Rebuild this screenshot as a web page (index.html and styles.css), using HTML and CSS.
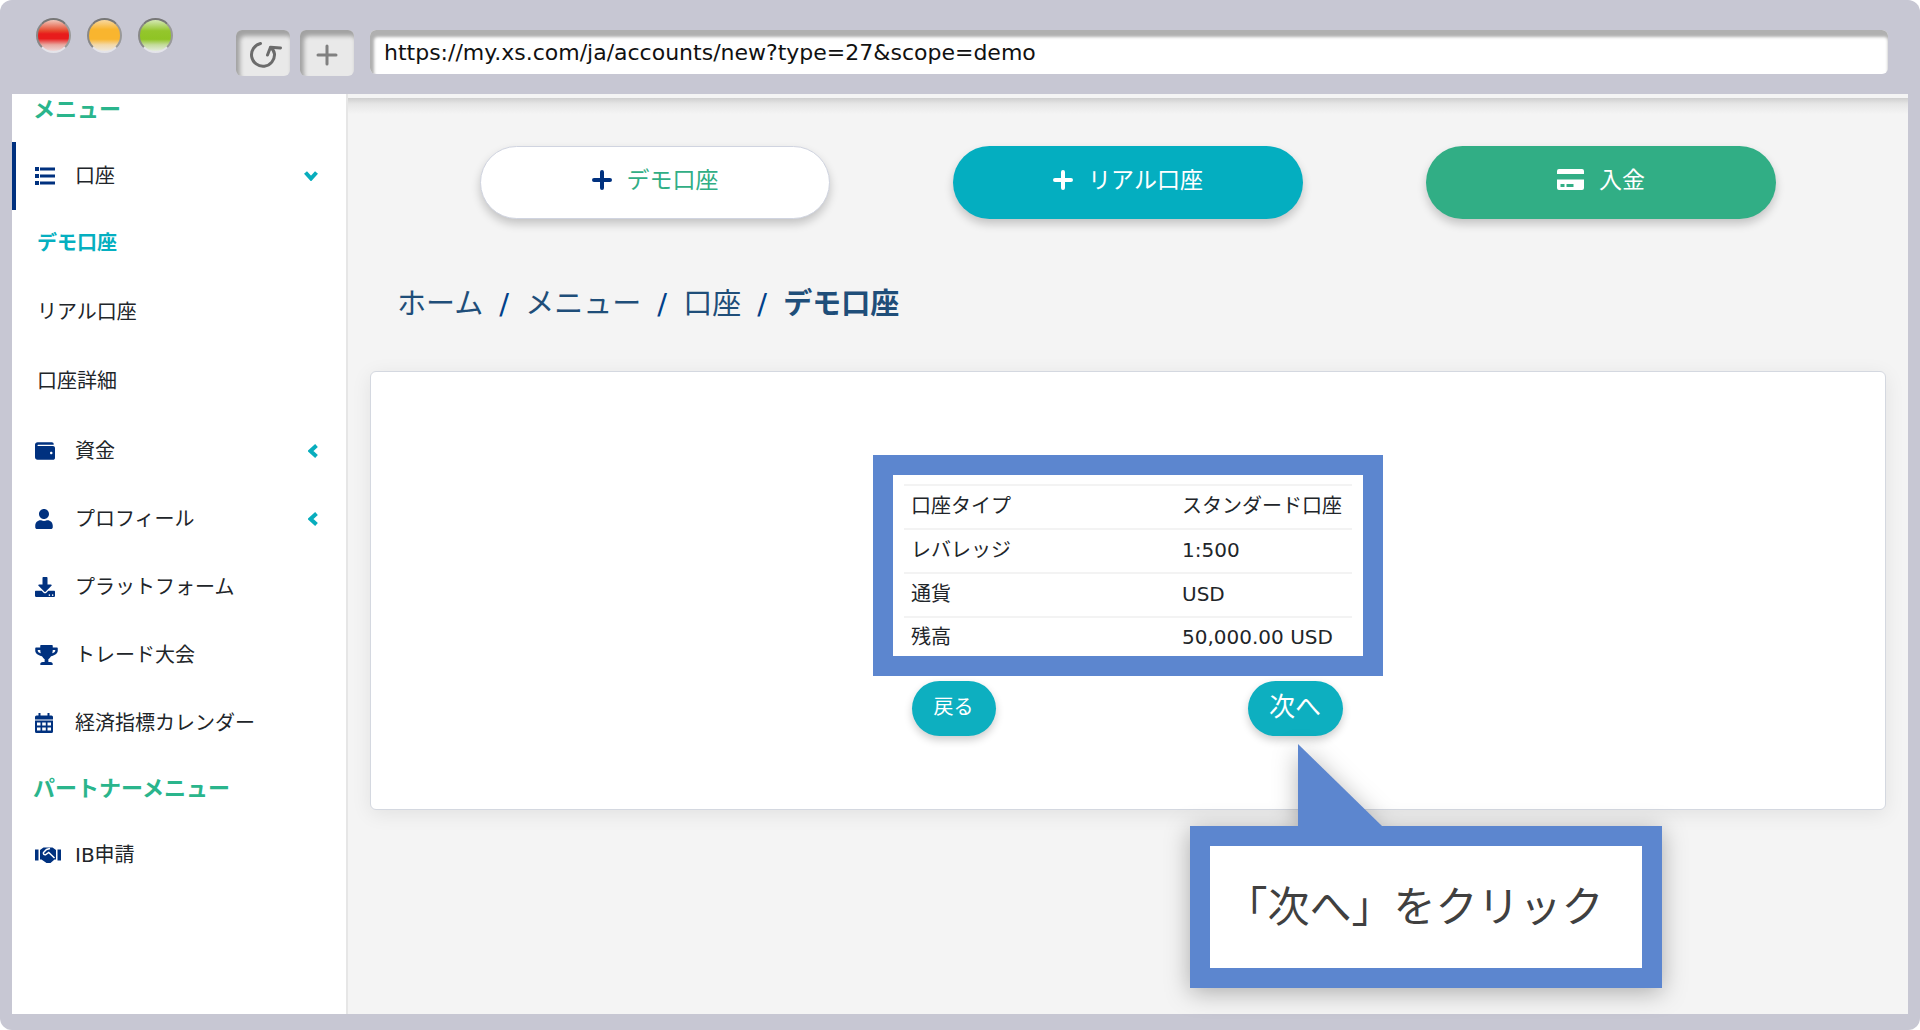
FILE: index.html
```html
<!DOCTYPE html>
<html lang="ja">
<head>
<meta charset="utf-8">
<title>デモ口座</title>
<link rel="stylesheet" href="styles.css">
</head>
<body>
<div class="window">
  <header class="toolbar">
    <div class="lights">
      <span class="light light-red"></span>
      <span class="light light-amber"></span>
      <span class="light light-green"></span>
    </div>
    <div class="tools">
      <button class="tool" type="button" aria-label="再読み込み">
        <svg width="38" height="28" viewBox="-4 1 38 28" fill="none" stroke="#6b6b6b" stroke-width="3" stroke-linecap="round" stroke-linejoin="round"><path d="M12.500 3.500A11.500 11.500 0 1 0 26.500 14Q26 10 22.500 7.500"/><path d="M19.500 15L22.500 7.300L32.500 8"/></svg>
      </button>
      <button class="tool" type="button" aria-label="新しいタブ">
        <svg width="22" height="22" viewBox="0 0 22 22" fill="none" stroke="#808080" stroke-width="3" stroke-linecap="round"><path d="M11 2v18M2 11h18"/></svg>
      </button>
    </div>
    <input class="address" type="text" aria-label="アドレス" value="https://my.xs.com/ja/accounts/new?type=27&amp;scope=demo">
  </header>

  <div class="page">
    <nav class="sidebar">
      <h2 class="nav-heading nav-heading-first">メニュー</h2>
      <ul class="nav-list">
        <li><a class="nav-item nav-open" href="#">
          <svg class="icon" width="20" height="18" viewBox="0 0 20 18"><path d="M0 0h4v4H0zM5 0.500h15v3H5zM0 7h4v4H0zM5 7.500h15v3H5zM0 14h4v4H0zM5 14.500h15v3H5z"/></svg>
          <span class="nav-label">口座</span>
          <svg class="chevron" width="14" height="10" viewBox="0 0 14 10"><path d="M1.500 1.500L7 7.500l5.500-6"/></svg>
        </a>
          <ul class="nav-list">
            <li><a class="sub-item sub-active" href="#">デモ口座</a></li>
            <li><a class="sub-item" href="#">リアル口座</a></li>
            <li><a class="sub-item" href="#">口座詳細</a></li>
          </ul>
        </li>
        <li><a class="nav-item" href="#">
          <svg class="icon" width="20" height="20" viewBox="0 0 512 512"><path d="M461 128H80c-9 0-16-7-16-16s7-16 16-16h384c9 0 16-7 16-16 0-27-21-48-48-48H64C29 32 0 61 0 96v320c0 35 29 64 64 64h397c28 0 51-22 51-48V176c0-26-23-48-51-48zM416 336c-18 0-32-14-32-32s14-32 32-32 32 14 32 32-14 32-32 32z"/></svg>
          <span class="nav-label">資金</span>
          <svg class="chevron" width="10" height="14" viewBox="0 0 10 14"><path d="M8.500 1.500L2.500 7l6 5.500"/></svg>
        </a></li>
        <li><a class="nav-item" href="#">
          <svg class="icon" width="18" height="20" viewBox="0 0 448 512"><path d="M224 256c71 0 128-57 128-128S295 0 224 0 96 57 96 128s57 128 128 128zm90 32h-17c-22 10-47 16-73 16s-51-6-73-16h-17C60 288 0 348 0 422V464c0 27 21 48 48 48h352c27 0 48-21 48-48v-42c0-74-60-134-134-134z"/></svg>
          <span class="nav-label">プロフィール</span>
          <svg class="chevron" width="10" height="14" viewBox="0 0 10 14"><path d="M8.500 1.500L2.500 7l6 5.500"/></svg>
        </a></li>
        <li><a class="nav-item" href="#">
          <svg class="icon" width="20" height="20" viewBox="0 0 512 512"><path d="M216 0h80c13 0 24 11 24 24v168h88c18 0 27 22 14 34L270 378c-8 8-20 8-28 0L90 226c-13-12-4-34 14-34H192V24c0-13 11-24 24-24zm296 376v112c0 13-11 24-24 24H24c-13 0-24-11-24-24V376c0-13 11-24 24-24h147l49 49c20 20 52 20 72 0l49-49H488c13 0 24 11 24 24zm-124 88c0-11-9-20-20-20s-20 9-20 20 9 20 20 20 20-9 20-20zm84 0c0-11-9-20-20-20s-20 9-20 20 9 20 20 20 20-9 20-20z"/></svg>
          <span class="nav-label">プラットフォーム</span>
        </a></li>
        <li><a class="nav-item" href="#">
          <svg class="icon" width="23" height="20" viewBox="0 0 576 512"><path d="M552 64H448V24c0-13-11-24-24-24H152c-13 0-24 11-24 24v40H24C11 64 0 75 0 88v56c0 36 22 72 62 101 31 22 70 37 110 41C203 338 240 360 240 360v72h-48c-35 0-64 21-64 56v12c0 7 5 12 12 12h296c7 0 12-5 12-12v-12c0-35-29-56-64-56h-48v-72s37-22 68-74c40-4 79-19 110-41 39-29 62-65 62-101V88c0-13-11-24-24-24zM99 193C75 175 64 156 64 144v-16h64c1 33 6 61 13 86-15-5-29-12-42-21zM512 144c0 16-18 36-35 49-13 9-27 16-42 21 7-25 12-53 13-86H512v16z"/></svg>
          <span class="nav-label">トレード大会</span>
        </a></li>
        <li><a class="nav-item" href="#">
          <svg class="icon" width="18" height="20" viewBox="0 0 18 20"><path fill-rule="evenodd" d="M3.500 0h2v2.500h7V0h2v2.500h2Q18 2.500 18 4v2.500H0V4Q0 2.500 1.500 2.500h2zM0 7.500h18v11Q18 20 16.500 20h-15Q0 20 0 18.500zM2 9.500v3h3.500v-3zm5.200 0v3h3.600v-3zm5.300 0v3H16v-3zM2 14.500v3h3.500v-3zm5.200 0v3h3.600v-3zm5.300 0v3H16v-3z"/></svg>
          <span class="nav-label">経済指標カレンダー</span>
        </a></li>
      </ul>
      <h2 class="nav-heading">パートナーメニュー</h2>
      <ul class="nav-list">
        <li><a class="nav-item" href="#">
          <svg class="icon" width="26" height="16" viewBox="0 0 26 16"><path d="M0 2.500h3.500v11H0zM22.500 2.500H26v11h-3.500zM5 3L8.500 0.500h9L21 3v9.500h-1.500L15.500 16h-4L6.500 12.500H5z"/><path d="M15 1.500L11.500 2.500L8.500 5.500q-.5 2.500 2 2.300l3.200-2.300L19.500 11" fill="none" stroke="#fff" stroke-width="1.500"/></svg>
          <span class="nav-label">IB申請</span>
        </a></li>
      </ul>
    </nav>

    <main class="main">
      <div class="actions">
        <button class="pill pill-demo" type="button">
          <svg width="20" height="20" viewBox="0 0 20 20" fill="none" stroke="currentColor" stroke-width="4" stroke-linecap="round"><path d="M10 2v16M2 10h16"/></svg>
          <span class="pill-demo-label">デモ口座</span>
        </button>
        <button class="pill pill-real" type="button">
          <svg width="20" height="20" viewBox="0 0 20 20" fill="none" stroke="currentColor" stroke-width="4" stroke-linecap="round"><path d="M10 2v16M2 10h16"/></svg>
          <span>リアル口座</span>
        </button>
        <button class="pill pill-deposit" type="button">
          <svg width="27" height="21" viewBox="0 0 27 21" fill="currentColor"><path fill-rule="evenodd" d="M2 0h23q2 0 2 2v3H0V2q0-2 2-2zM0 10.500h27V19q0 2-2 2H2q-2 0-2-2zM3.500 15v3h4v-3zM9.500 15v3h7v-3z"/></svg>
          <span>入金</span>
        </button>
      </div>

      <nav class="breadcrumb" aria-label="パンくず">
        <a href="#">ホーム</a><span class="slash">/</span><a href="#">メニュー</a><span class="slash">/</span><a href="#">口座</a><span class="slash">/</span><strong>デモ口座</strong>
      </nav>

      <section class="card">
        <div class="summary">
          <table class="details">
            <tr><th scope="row">口座タイプ</th><td>スタンダード口座</td></tr>
            <tr><th scope="row">レバレッジ</th><td>1:500</td></tr>
            <tr><th scope="row">通貨</th><td>USD</td></tr>
            <tr><th scope="row">残高</th><td>50,000.00 USD</td></tr>
          </table>
        </div>
        <div class="steps">
          <button class="step" type="button">戻る</button>
          <div class="next">
            <button class="step step-next" type="button">次へ</button>
            <div class="callout">
              <svg class="callout-tail" width="86" height="84" viewBox="0 0 86 84"><path d="M0 0L84 82V84H0z" fill="#5c86cf"/></svg>
              <p class="callout-text">「次へ」をクリック</p>
            </div>
          </div>
        </div>
      </section>
    </main>
  </div>
</div>
</body>
</html>
```

FILE: styles.css
```css
* {
  box-sizing: border-box;
}

body {
  margin: 0;
  background: #fff;
  color: #212529;
  font-family: "DejaVu Sans", "Noto Sans CJK JP", sans-serif;
  font-size: 20px;
  line-height: 32px;
}

a {
  color: inherit;
  text-decoration: none;
}

button {
  font: inherit;
  cursor: pointer;
}

/* Browser window */
.window {
  display: flex;
  flex-direction: column;
  min-height: 100vh;
  padding: 0 12px 16px;
  border-radius: 12px;
  background: #c7c7d3;
}

.toolbar {
  display: flex;
  align-items: flex-start;
  gap: 16px;
  padding: 30px 20px 18px 24px;
}

.lights {
  display: flex;
  gap: 16px;
  margin: -12px 47px 0 0;
}

.light {
  width: 35px;
  height: 35px;
  border: 2px solid;
  border-color: #777 #999 #e4e4ea #888;
  border-radius: 50%;
}

.light-red {
  background: linear-gradient(#f0c8bc, #e6482c 35%, #e81c1c 45%, #e81c1c 60%, #e8a8a0 80%, #eed8d8);
}

.light-amber {
  background: linear-gradient(#f8d8a0, #f9b52f 30%, #f9b52f 62%, #f3d8a8 80%, #eee8dc);
}

.light-green {
  background: linear-gradient(#d4e8b4, #94c62c 35%, #8fc424 62%, #c4dc9c 80%, #e4ecdc);
}

.tools {
  display: flex;
  gap: 10px;
}

.tool {
  display: flex;
  align-items: center;
  justify-content: center;
  width: 54px;
  height: 46px;
  padding: 4px 0 0;
  border: 0;
  border-radius: 6px;
  background: #e9e9e9;
  box-shadow: inset 3px 5px 4px 1px #a2a2a2;
}

.address {
  flex: 1;
  height: 44px;
  padding: 0 14px;
  border: 0;
  border-radius: 6px;
  background: #fff;
  box-shadow: inset 2px 5px 3px 2px #b0b0b0;
  color: #111;
  font: inherit;
  font-size: 22px;
}

/* Page */
.page {
  display: flex;
  flex: 1;
}

.sidebar {
  flex: none;
  width: 336px;
  border-right: 2px solid #e6e6e6;
  background: #fff;
}

.nav-heading {
  margin: 0;
  padding: 16px 21px;
  color: #2ab58c;
  font-size: 22px;
  font-weight: 700;
}

.nav-heading-first {
  padding-top: 0;
}

.nav-list {
  margin: 0;
  padding: 0;
  list-style: none;
}

.nav-item {
  display: grid;
  grid-template-columns: 40px 1fr auto;
  align-items: center;
  height: 68px;
  padding: 0 28px 0 19px;
  border-left: 4px solid transparent;
}

.nav-open {
  border-left-color: #00317f;
}

.icon {
  fill: #00317f;
}

.chevron {
  fill: none;
  stroke: #08adbd;
  stroke-width: 4;
}

.sub-item {
  display: flex;
  align-items: center;
  height: 69px;
  padding: 0 25px 3px;
}

.sub-active {
  color: #05afc0;
  font-weight: 700;
}

.main {
  flex: 1;
  padding: 52px 22px 40px;
  background: linear-gradient(#f4f4f4 4px, #cfcfcf 4px, #e6e6e6 10px, #f4f4f4 20px);
}

.actions {
  display: flex;
  justify-content: center;
  gap: 123px;
}

.pill {
  display: flex;
  align-items: center;
  justify-content: center;
  gap: 15px;
  width: 350px;
  height: 73px;
  padding: 0 0 6px;
  border: 1px solid transparent;
  border-radius: 37px;
  box-shadow: 0 5px 10px rgba(0, 0, 0, 0.2);
  color: #fff;
  font-size: 23px;
}

.pill-demo {
  border-color: #d0d4e0;
  background: #fff;
  color: #00317f;
}

.pill-demo-label {
  color: #31ae85;
}

.pill-real {
  background: #04aec0;
}

.pill-deposit {
  background: #31ae85;
}

.breadcrumb {
  display: flex;
  margin: 65px 0 47px;
  padding: 0 27px;
  color: #1f4e79;
  font-size: 29px;
  line-height: 40px;
}

.slash {
  width: 42px;
  color: #00418a;
  text-align: center;
}

.card {
  display: flex;
  flex-direction: column;
  align-items: center;
  padding: 83px 20px 73px;
  border: 1px solid #d4d8e0;
  border-radius: 6px;
  background: #fff;
  box-shadow: 0 4px 20px rgba(0, 0, 0, 0.08);
}

.summary {
  width: 510px;
  padding: 9px 11px 0;
  border: 20px solid #5c86cf;
}

.details {
  width: 100%;
  border-collapse: collapse;
  table-layout: fixed;
}

.details th,
.details td {
  height: 44px;
  padding: 0 0 2px 7px;
  border-top: 2px solid #f3f3f3;
  font-weight: 400;
  text-align: left;
  white-space: nowrap;
}

.details tr:last-child > * {
  height: 39px;
  padding-bottom: 0;
}

.details th {
  width: 271px;
}

.steps {
  display: flex;
  justify-content: space-between;
  width: 431px;
  margin: 5px 2px 0 0;
}

.step {
  min-width: 84px;
  height: 55px;
  padding: 0 20px 4px;
  border: 0;
  border-radius: 28px;
  background: #0dafc0;
  box-shadow: 0 4px 8px rgba(0, 0, 0, 0.2);
  color: #fff;
}

.step-next {
  min-width: 95px;
  font-size: 26px;
}

/* Callout pinned under the next button */
.next {
  position: relative;
}

.callout {
  position: absolute;
  top: 145px;
  left: -58px;
  filter: drop-shadow(0 4px 12px rgba(0, 0, 0, 0.3));
}

.callout-tail {
  position: absolute;
  bottom: 100%;
  left: 108px;
  margin-bottom: -2px;
}

.callout-text {
  width: 472px;
  margin: 0;
  padding: 32px 0 30px 16px;
  border: 20px solid #5c86cf;
  background: #fff;
  color: #404040;
  font-size: 42px;
  line-height: 60px;
}
```
